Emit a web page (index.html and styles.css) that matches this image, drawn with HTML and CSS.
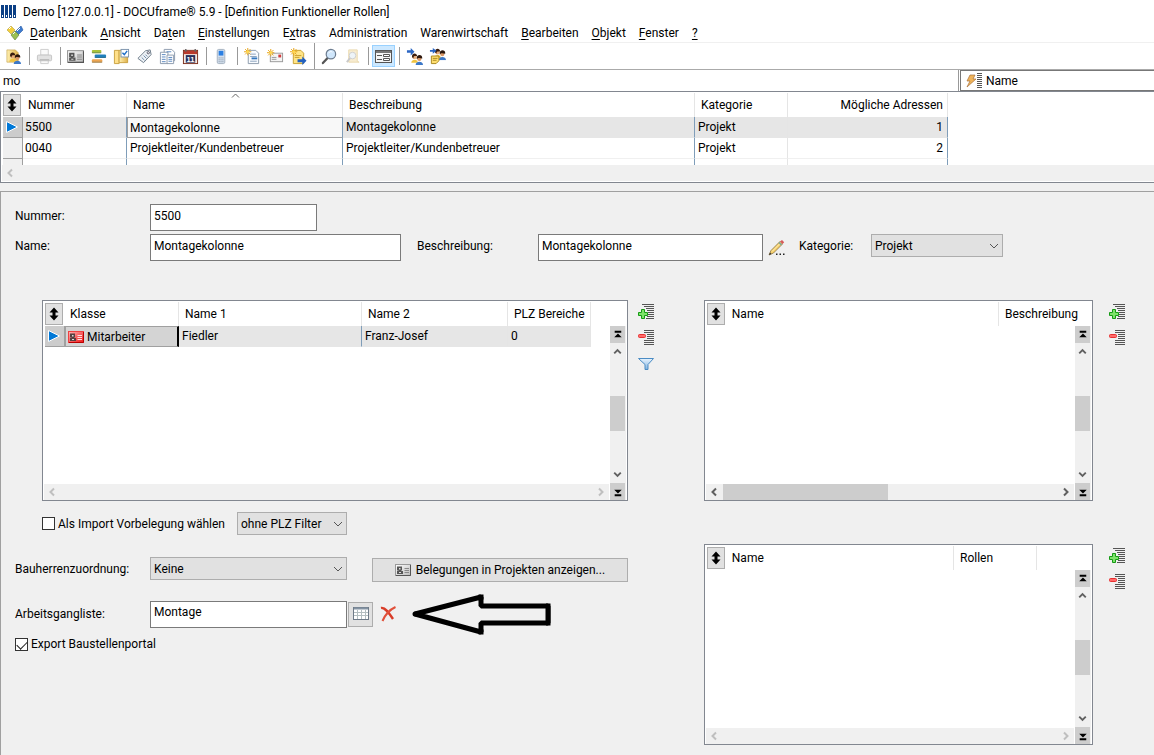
FILE: index.html
```html
<!DOCTYPE html>
<html lang="de">
<head>
<meta charset="utf-8">
<title>Demo [127.0.0.1] - DOCUframe® 5.9</title>
<link rel="stylesheet" href="styles.css">
</head>
<body>
<svg class="defs" aria-hidden="true">
  <defs>
    <linearGradient id="g-card" x1="0" y1="0" x2="1" y2="1"><stop offset="0" stop-color="#fff"/><stop offset="1" stop-color="#bbb"/></linearGradient>
    <linearGradient id="g-red" x1="0" y1="0" x2="1" y2="1"><stop offset="0" stop-color="#ffb4b4"/><stop offset="1" stop-color="#f01414"/></linearGradient>
    <linearGradient id="g-fold" x1="0" y1="0" x2="1" y2="0"><stop offset="0" stop-color="#fff0b0"/><stop offset="1" stop-color="#dfb04a"/></linearGradient>
    <linearGradient id="g-blue" x1="0" y1="0" x2="0" y2="1"><stop offset="0" stop-color="#e8f4ff"/><stop offset="1" stop-color="#7fb2e0"/></linearGradient>
    <symbol id="i-updown" viewBox="0 0 16 16"><path d="M8 1.500l4.500 5H9.500v3h3L8 14.500l-4.500-5h3v-3h-3z" fill="#000"/></symbol>
    <symbol id="i-play" viewBox="0 0 16 16"><path d="M2.500 2.500v11l11-5.500z" fill="#0078d7" stroke="#fff" stroke-width="1"/></symbol>
    <symbol id="i-left" viewBox="0 0 16 16"><path d="M10 4.500L6.500 8l3.500 3.500" fill="none" stroke="currentColor" stroke-width="2"/></symbol>
    <symbol id="i-right" viewBox="0 0 16 16"><path d="M6 4.500L9.500 8 6 11.500" fill="none" stroke="currentColor" stroke-width="2"/></symbol>
    <symbol id="i-up" viewBox="0 0 16 16"><path d="M4.500 10L8 6.500l3.500 3.500" fill="none" stroke="currentColor" stroke-width="2"/></symbol>
    <symbol id="i-down" viewBox="0 0 16 16"><path d="M4.500 6L8 9.500 11.500 6" fill="none" stroke="currentColor" stroke-width="2"/></symbol>
    <symbol id="i-first" viewBox="0 0 16 16"><path d="M5 4h7v2H5zM8.500 7l4 4h-8z" fill="#000"/></symbol>
    <symbol id="i-last" viewBox="0 0 16 16"><path d="M5 11h7v2H5zM8.500 10l4-4h-8z" fill="#000"/></symbol>
    <symbol id="i-card" viewBox="0 0 16 16"><rect x=".5" y="2.500" width="15" height="11" fill="url(#g-card)" stroke="#999"/><path d="M15.500 3v10.500H1" fill="none" stroke="#555"/><path d="M2 4.500h5v4H6V9h2v3H2V9h1.500v-.5H2z" fill="#555"/><path d="M4 6h1.500v1.500H4zM4 10h2v1H4z" fill="#ddd"/><path d="M9.500 6.500H14M9.500 8.500H14M9.500 10.500H14" stroke="#888"/></symbol>
    <symbol id="i-cardred" viewBox="0 0 16 16"><rect x=".5" y="2.500" width="15" height="11" fill="url(#g-red)" stroke="#f04040"/><path d="M15.500 3v10.500H1" fill="none" stroke="#b80000"/><path d="M2 4.500h5v4H6V9h2v3H2V9h1.500v-.5H2z" fill="#554040"/><path d="M4 6h1.500v1.500H4zM4 10h2v1H4z" fill="#ddd"/><path d="M9.500 6.500H14M9.500 8.500H14M9.500 10.500H14" stroke="#ffdede"/></symbol>
    <symbol id="i-add" viewBox="0 0 18 16"><path d="M5 .5h12M7 2.500h10M9 4.500h8M10 6.500h7M11 8.500h6M11 10.500h6M10 12.500h7M9 14.500h8" stroke="#555"/><path d="M4.500 5.500h3v3h3v3h-3v3h-3v-3h-3v-3h3z" fill="#7ee36a" stroke="#159a15"/></symbol>
    <symbol id="i-remove" viewBox="0 0 18 16"><path d="M7 .5h10M7 2.500h10M10 4.500h7M10 6.500h7M10 8.500h7M7 10.500h10M7 12.500h10M7 14.500h10" stroke="#555"/><rect x="1.500" y="4.500" width="7" height="3" rx="1" fill="#ff6a6a" stroke="#e83030"/></symbol>
    <symbol id="i-filter" viewBox="0 0 18 16"><path d="M1.500 2.500h15L11 8.500v5H8v-5z" fill="url(#g-blue)" stroke="#4b8cc4"/></symbol>
    <symbol id="i-people" viewBox="0 0 18 18"><path d="M2 15c0-5 9-6 9 0z" fill="#f0c33e"/><circle cx="6.500" cy="7" r="3" fill="#e8ae7c"/><path d="M3 7c-.5-6 7-6 7-1-3 0-5-1-5 3z" fill="#3a1e10"/><path d="M8 18c0-6 10-6 10 0z" fill="#3c78c8"/><circle cx="13" cy="9.500" r="3" fill="#d99868"/><path d="M9.500 9c-.5-6 8-6 7.500 0-3 0-5-2-7.500 1z" fill="#2b160c"/></symbol>
    <symbol id="i-star" viewBox="0 0 10 10"><path d="M5 0v10M0 5h10M1.500 1.500l7 7M8.500 1.500l-7 7" stroke="#e8a51c" stroke-width="1.300"/><circle cx="5" cy="5" r="2" fill="#ffd850"/></symbol>
    <symbol id="i-page" viewBox="0 0 18 18"><path d="M3.500 2.500h8l3 3v11h-11z" fill="#f8fbff" stroke="#8a99aa"/><path d="M5.500 6.500h6M5.500 9h7M5.500 14h7" stroke="#8aa0bb"/><path d="M7 11h6" stroke="#3478c0" stroke-width="2"/></symbol>
  </defs>
</svg>

<div class="app">
  <header class="titlebar">
    <svg class="logo" viewBox="0 0 16 16"><path d="M0 1h3v13H0zM4 1h3v13H4zM8 1h3v13H8zM12 1h3v13h-3z" fill="#0b3f85"/><path d="M1 11h1v2H1zM5 11h1v2H5zM9 11h1v2H9zM13 11h1v2h-1z" fill="#fff"/></svg>
    <span>Demo [127.0.0.1] - DOCUframe® 5.9 - [Definition Funktioneller Rollen]</span>
  </header>

  <nav class="menubar">
    <svg class="menulogo" viewBox="0 0 18 18"><path d="M1 6l4-4 4 4-4 4z" fill="#f3cf3c" stroke="#b4a040" stroke-width=".6"/><path d="M8 9l7-7 2 4-6 6z" fill="#3e7cd0" stroke="#2355a0" stroke-width=".6"/><path d="M5 11l4-4 4 4-4 5z" fill="#9bc052" stroke="#5c7d38" stroke-width=".6"/><path d="M3 5l2-2M11 7l3-3M7 10l2-2" stroke="#fff"/></svg>
    <button><u>D</u>atenbank</button>
    <button><u>A</u>nsicht</button>
    <button>Da<u>t</u>en</button>
    <button><u>E</u>instellungen</button>
    <button>E<u>x</u>tras</button>
    <button>Administration</button>
    <button>Warenwirtschaft</button>
    <button><u>B</u>earbeiten</button>
    <button><u>O</u>bjekt</button>
    <button><u>F</u>enster</button>
    <button><u>?</u></button>
  </nav>

  <div class="toolbar" role="toolbar" aria-label="Werkzeuge">
    <button aria-label="Adressen"><svg viewBox="0 0 18 18"><path d="M2 2h9l3 3v10H2z" fill="url(#g-fold)" stroke="#c09a40" stroke-width=".6"/><use href="#i-people" x="3" y="3" width="14" height="14"/></svg></button>
    <span class="sep"></span>
    <button aria-label="Drucken"><svg viewBox="0 0 18 18"><path d="M5 1.500h8v6H5zM5 12h8v4.500H5z" fill="#fafafa" stroke="#ccc"/><rect x="1.500" y="7.500" width="15" height="6" rx="1" fill="#e2e2e2" stroke="#c4c4c4"/><path d="M4 12.500h10" stroke="#aaa"/></svg></button>
    <span class="sep"></span>
    <button aria-label="Karte"><svg viewBox="0 0 16 16"><use href="#i-card"/></svg></button>
    <button aria-label="Projekte"><svg viewBox="0 0 18 18"><rect x="2" y="2" width="10" height="3.500" rx="1" fill="#a9c33a"/><rect x="5" y="7" width="12" height="3.500" rx="1" fill="#1f7fbd"/><rect x="2" y="12" width="11" height="3.500" rx="1" fill="#eda550"/><path d="M2 5h10M5 10h12M2 15h11" stroke="#466" stroke-opacity=".5"/></svg></button>
    <button aria-label="Ordner"><svg viewBox="0 0 18 18"><path d="M1.500 2.500h5v14h-5z" fill="#ffe08a" stroke="#c9a040"/><path d="M6.500 2.500h9v13h-9z" fill="url(#g-fold)" stroke="#c9a040"/><rect x="8.500" y="1.500" width="8" height="8" fill="#fff" stroke="#7b93ad"/><path d="M10 5l2 2 3-4" stroke="#2070c8" stroke-width="1.500" fill="none"/></svg></button>
    <button aria-label="Etikett"><svg viewBox="0 0 18 18"><path d="M2 11L10 3l5-1 1 5-8 8.500z" fill="#eef2f6" stroke="#6b7a88"/><circle cx="13" cy="5" r="1.200" fill="#fff" stroke="#556"/><path d="M6 10l3 3M8 8l3 3M10 7l2 2" stroke="#6b88a8"/></svg></button>
    <button aria-label="Dokumente"><svg viewBox="0 0 18 18"><path d="M5.500 1.500h8l3 3v9h-11z" fill="#fff" stroke="#8c9bad"/><path d="M1.500 4.500h8v12h-8z" fill="#fff" stroke="#8c9bad"/><path d="M8.500 7.500h7v9h-7z" fill="#fff" stroke="#8c9bad"/><path d="M3 7h4M3 9.500h4M3 12h4M3 14.500h4M10 10h4M10 12h4M10 14h4M8 4h5" stroke="#5584bd"/></svg></button>
    <button aria-label="Kalender"><svg viewBox="0 0 18 18"><rect x="1.500" y="2.500" width="15" height="14" fill="#f4ece4" stroke="#7b2d1c"/><path d="M2 3h14v3.500H2z" fill="#b93a2c"/><path d="M4 1v3M14 1v3" stroke="#666" stroke-width="1.500"/><rect x="4" y="7.500" width="10" height="8" fill="#28305c"/><text x="9" y="14.500" class="day">11</text></svg></button>
    <span class="sep"></span>
    <button aria-label="Telefon"><svg viewBox="0 0 18 18"><rect x="4.500" y="1.500" width="8" height="15" rx="1.500" fill="#d4e0ee" stroke="#a4b0bf"/><rect x="6" y="3" width="5" height="5" fill="#2b7fe2"/><path d="M6 10.500h5M6 12.500h5M6 14.500h5" stroke="#7d8b9b" stroke-dasharray="1 1"/></svg></button>
    <span class="sep"></span>
    <button aria-label="Neues Dokument"><svg viewBox="0 0 18 18"><use href="#i-page" x="1" width="18" height="18"/><use href="#i-star" width="8" height="8"/></svg></button>
    <button aria-label="Neue Nachricht"><svg viewBox="0 0 18 18"><rect x="3.500" y="5.500" width="13" height="9" fill="#f4f4f4" stroke="#999"/><path d="M12 7h3v3h-3z" fill="#d23c3c"/><path d="M5 10h5M5 12h5" stroke="#999"/><use href="#i-star" y="1" width="8" height="8"/></svg></button>
    <button aria-label="Neue Aufgabe"><svg viewBox="0 0 18 18"><path d="M3.500 2.500h8l3 3v11h-11z" fill="#ffe486" stroke="#c9a030"/><path d="M5 8h7M5 10h5" stroke="#c9a030"/><path d="M8 12h5V9l4.500 4.500L13 18v-3H8z" fill="#2260c0"/><use href="#i-star" width="8" height="8"/></svg></button>
    <span class="sep sep-full"></span>
    <button aria-label="Suchen"><svg viewBox="0 0 18 18"><path d="M7 10.500L2 16" stroke="#555" stroke-width="2.400" stroke-linecap="round"/><circle cx="10.500" cy="6.500" r="5" fill="#cfe6fb" stroke="#6d7d90" stroke-width="1.300"/><path d="M8 5.500c1-2 3-2 4-1" stroke="#fff" fill="none"/></svg></button>
    <button aria-label="Ordnersuche"><svg viewBox="0 0 18 18"><path d="M5 2h9v12l2 1H5z" fill="#f8ecd0" stroke="#ead9ae"/><path d="M7 10l-4 5" stroke="#c9c9c9" stroke-width="2"/><circle cx="9" cy="8" r="3.500" fill="#eef4f8" stroke="#cfcfcf"/></svg></button>
    <span class="sep"></span>
    <button class="active" aria-label="Formularansicht"><svg viewBox="0 0 17 17"><rect x=".5" y="2.500" width="16" height="12" fill="#f5f5f5" stroke="#555"/><path d="M1 4h15" stroke="#777" stroke-width="2"/><path d="M2 7.500h5M2 11.500h5" stroke="#555"/><path d="M8.500 6.500h6v2h-6zM8.500 10.500h6v2h-6z" fill="#fff" stroke="#555"/></svg></button>
    <span class="sep"></span>
    <button aria-label="Zuordnen"><svg viewBox="0 0 18 18"><use href="#i-people" x="4" y="4" width="14" height="14"/><path d="M1 2.500h4V0l4 4-4 4V5H1z" fill="#2a66c4"/></svg></button>
    <button aria-label="Rollen"><svg viewBox="0 0 18 18"><use href="#i-people" x="4" y="-1" width="14" height="14"/><path d="M1 2h3V0l4 3-4 3V4H1z" fill="#2a66c4"/><path d="M2.500 8.500h8v5l-3 3h-5z" fill="#ffdf70" stroke="#a8861c"/><path d="M4 11h5M4 13h4" stroke="#a8861c"/></svg></button>
  </div>

  <div class="search">
    <input class="search-text" type="text" value="mo" aria-label="Suche">
    <button class="search-field"><svg viewBox="0 0 18 16"><path d="M5 2h5L8 6h3l-9 8 3-6H2z" fill="#f0b45a" stroke="#a8703a" stroke-width=".7"/><path d="M12 .5h5M12 2.500h5M12 4.500h5M12 6.500h5M12 8.500h5M12 10.500h5M12 12.500h5M12 14.500h5" stroke="#555"/></svg><span>Name</span></button>
  </div>

  <section class="result">
    <div class="result-body">
      <table class="grid">
        <colgroup><col class="w20"><col class="w104"><col class="w216"><col class="w352"><col class="w93"><col class="w160"></colgroup>
        <thead><tr><th><button class="sorter" aria-label="Sortieren"><svg viewBox="0 0 16 16"><use href="#i-updown"/></svg></button></th><th>Nummer</th><th class="sorted">Name<svg class="caret" viewBox="0 0 9 5"><path d="M1 4.500L4.500 1 8 4.500" fill="none" stroke="#666"/></svg></th><th>Beschreibung</th><th>Kategorie</th><th class="num">Mögliche Adressen</th></tr></thead>
        <tbody>
          <tr class="sel"><td class="mark"><svg viewBox="0 0 16 16"><use href="#i-play"/></svg></td><td>5500</td><td class="focus">Montagekolonne</td><td>Montagekolonne</td><td>Projekt</td><td class="num">1</td></tr>
          <tr><td class="mark"></td><td>0040</td><td>Projektleiter/Kundenbetreuer</td><td>Projektleiter/Kundenbetreuer</td><td>Projekt</td><td class="num">2</td></tr>
          <tr><td class="mark"></td><td></td><td></td><td></td><td></td><td></td></tr>
        </tbody>
      </table>
    </div>
    <div class="hbar off"><svg viewBox="0 0 16 16"><use href="#i-left"/></svg></div>
  </section>

  <main class="form">
    <div class="row row-first">
      <label class="lab" for="nr">Nummer:</label><input class="field w167" id="nr" type="text" value="5500">
    </div>
    <div class="row">
      <label class="lab" for="nm">Name:</label><input class="field w251" id="nm" type="text" value="Montagekolonne">
      <label class="lab lab-desc" for="be">Beschreibung:</label><input class="field w225" id="be" type="text" value="Montagekolonne">
      <button class="icon pencil" aria-label="Bearbeiten"><svg viewBox="0 0 18 18"><path d="M1 16l2-4.500L12 2.500l2.500 2.500-9 9z" fill="#f6cf6a" stroke="#8c7440" stroke-width=".8"/><path d="M4 12.500L13 3.500" stroke="#fff0b8"/><path d="M12 2.500l2-1.500 2.200 2.200L14.500 5z" fill="#d85a5a"/><path d="M11 3.500l2.500 2.500" stroke="#77a89a" stroke-width="1.400"/><path d="M1 16l1-2.500 1.500 1.500z" fill="#333"/><path d="M8 14.500h1.500V16H8zM11.500 14.500H13V16h-1.500zM15 14.500h1.500V16H15z" fill="#222"/></svg></button>
      <label class="lab lab-cat" for="ka">Kategorie:</label><span class="pick w132"><select id="ka"><option>Projekt</option></select><svg viewBox="0 0 10 6"><path d="M1 1l4 4 4-4" fill="none" stroke="#555"/></svg></span>
    </div>

    <div class="panels">
      <div class="left">
        <div class="listrow">
          <div class="list">
            <table class="grid grid-left">
              <colgroup><col class="w20"><col class="w114"><col class="w183"><col class="w146"><col class="w83"></colgroup>
              <thead><tr><th><button class="sorter" aria-label="Sortieren"><svg viewBox="0 0 16 16"><use href="#i-updown"/></svg></button></th><th>Klasse</th><th>Name 1</th><th>Name 2</th><th>PLZ Bereiche</th></tr></thead>
              <tbody><tr class="sel"><td class="mark"><svg viewBox="0 0 16 16"><use href="#i-play"/></svg></td><td class="klass"><svg viewBox="0 0 16 16"><use href="#i-cardred"/></svg>Mitarbeiter</td><td>Fiedler</td><td>Franz-Josef</td><td>0</td></tr></tbody>
            </table>
            <div class="vbar"><svg class="end" viewBox="0 0 16 16"><use href="#i-first"/></svg><svg viewBox="0 0 16 16"><use href="#i-up"/></svg><div class="track"><span class="thumb"></span></div><svg viewBox="0 0 16 16"><use href="#i-down"/></svg><svg class="end" viewBox="0 0 16 16"><use href="#i-last"/></svg></div>
            <div class="hbar off"><svg viewBox="0 0 16 16"><use href="#i-left"/></svg><svg viewBox="0 0 16 16"><use href="#i-right"/></svg></div>
          </div>
        </div>

        <div class="line line-import">
          <label class="tick tick-import"><input type="checkbox"><span>Als Import Vorbelegung wählen</span></label>
          <span class="pick w110"><select aria-label="PLZ Filter"><option>ohne PLZ Filter</option></select><svg viewBox="0 0 10 6"><path d="M1 1l4 4 4-4" fill="none" stroke="#555"/></svg></span>
        </div>
        <div class="line line-bau">
          <label class="lab" for="bh">Bauherrenzuordnung:</label><span class="pick w197"><select id="bh"><option>Keine</option></select><svg viewBox="0 0 10 6"><path d="M1 1l4 4 4-4" fill="none" stroke="#555"/></svg></span>
          <button class="wide"><svg viewBox="0 0 16 16"><use href="#i-card"/></svg>Belegungen in Projekten anzeigen...</button>
        </div>
        <div class="line line-arb">
          <label class="lab" for="ag">Arbeitsgangliste:</label><input class="field w197" id="ag" type="text" value="Montage">
          <button class="browse" aria-label="Auswählen"><svg viewBox="0 0 18 16"><rect x="1.500" y="1.500" width="15" height="12" fill="#fff" stroke="#6f7b88"/><path d="M2 2.500h14" stroke="#8392a2" stroke-width="2"/><path d="M2 6.500h14M2 9.500h14M5.500 4v9M9.500 4v9M13.500 4v9" stroke="#b4bec0"/></svg></button>
          <button class="icon" aria-label="Entfernen"><svg viewBox="0 0 16 16"><path d="M1 2c4-1 8 5 12 11" fill="none" stroke="#d83c28" stroke-width="2.400"/><path d="M15.500 1C9 4 5 9 2.500 15" fill="none" stroke="#e0503a" stroke-width="2"/></svg></button>
          <svg class="arrow" viewBox="0 0 140 42"><path d="M3 21L69 4v9h67v17H69v9z" fill="none" stroke="#000" stroke-width="5" stroke-linejoin="bevel"/><path d="M134 10.500h4.500v22H134zM66.500 1.500h5v5h-5zM66.500 36.500h5v5h-5z"/><circle cx="3" cy="21" r="2.500"/></svg>
        </div>
        <label class="tick tick-export"><input type="checkbox" checked><span>Export Baustellenportal</span></label>
      </div>

      <div class="side">
        <button class="icon" aria-label="Hinzufügen"><svg viewBox="0 0 18 16"><use href="#i-add"/></svg></button>
        <button class="icon" aria-label="Entfernen"><svg viewBox="0 0 18 16"><use href="#i-remove"/></svg></button>
        <button class="icon" aria-label="Filter"><svg viewBox="0 0 18 16"><use href="#i-filter"/></svg></button>
      </div>

      <div class="right">
        <div class="listrow">
          <div class="list">
            <table class="grid grid-full">
              <colgroup><col class="w20"><col><col class="w92"></colgroup>
              <thead><tr><th><button class="sorter" aria-label="Sortieren"><svg viewBox="0 0 16 16"><use href="#i-updown"/></svg></button></th><th>Name</th><th class="last">Beschreibung</th></tr></thead>
            </table>
            <div class="vbar"><svg class="end" viewBox="0 0 16 16"><use href="#i-first"/></svg><svg viewBox="0 0 16 16"><use href="#i-up"/></svg><div class="track"><span class="thumb"></span></div><svg viewBox="0 0 16 16"><use href="#i-down"/></svg><svg class="end" viewBox="0 0 16 16"><use href="#i-last"/></svg></div>
            <div class="hbar"><svg viewBox="0 0 16 16"><use href="#i-left"/></svg><span class="hthumb"></span><svg viewBox="0 0 16 16"><use href="#i-right"/></svg></div>
          </div>
          <div class="side">
            <button class="icon" aria-label="Hinzufügen"><svg viewBox="0 0 18 16"><use href="#i-add"/></svg></button>
            <button class="icon" aria-label="Entfernen"><svg viewBox="0 0 18 16"><use href="#i-remove"/></svg></button>
          </div>
        </div>
        <div class="listrow">
          <div class="list">
            <table class="grid grid-full">
              <colgroup><col class="w20"><col><col class="w83"><col class="w54"></colgroup>
              <thead><tr><th><button class="sorter" aria-label="Sortieren"><svg viewBox="0 0 16 16"><use href="#i-updown"/></svg></button></th><th>Name</th><th>Rollen</th><th class="last"></th></tr></thead>
            </table>
            <div class="vbar"><svg class="end" viewBox="0 0 16 16"><use href="#i-first"/></svg><svg viewBox="0 0 16 16"><use href="#i-up"/></svg><div class="track"><span class="thumb"></span></div><svg viewBox="0 0 16 16"><use href="#i-down"/></svg><svg class="end" viewBox="0 0 16 16"><use href="#i-last"/></svg></div>
            <div class="hbar off"><svg viewBox="0 0 16 16"><use href="#i-left"/></svg><svg viewBox="0 0 16 16"><use href="#i-right"/></svg></div>
          </div>
          <div class="side">
            <button class="icon" aria-label="Hinzufügen"><svg viewBox="0 0 18 16"><use href="#i-add"/></svg></button>
            <button class="icon" aria-label="Entfernen"><svg viewBox="0 0 18 16"><use href="#i-remove"/></svg></button>
          </div>
        </div>
      </div>
    </div>
  </main>
</div>
</body>
</html>
```
FILE: styles.css
```css
* { box-sizing: border-box; }
body { margin: 0; background: #f0f0f0; color: #000; font: 12px/16px Roboto, "Noto Sans", sans-serif; }
button, input, select { font: inherit; color: inherit; margin: 0; border-radius: 0; }
button { padding: 0; border: 0; background: none; }
svg { display: block; flex: none; }
.defs { position: absolute; width: 0; height: 0; }
.app { display: flex; flex-direction: column; min-height: 100vh; }

.titlebar { display: flex; align-items: center; gap: 6px; height: 24px; padding-left: 1px; background: #fff; white-space: nowrap; }
.logo { width: 16px; height: 16px; }
.menubar { display: flex; align-items: center; height: 18px; padding-left: 6px; background: #fff; }
.menulogo { width: 18px; height: 18px; }
.menubar button { padding: 0 7px 0 6px; white-space: nowrap; }
.menubar u { text-underline-offset: 2px; }

.toolbar { display: flex; align-items: center; height: 28px; padding-left: 2px; background: #fff; border-top: 1px solid #f0f0f0; border-bottom: 1px solid #aaa; }
.toolbar button { display: flex; align-items: center; justify-content: center; width: 23px; height: 22px; }
.toolbar svg { width: 17px; height: 17px; }
.toolbar .active { background: #cce8ff; border: 1px solid #99d1ff; }
.sep { width: 8px; height: 18px; border-left: 4px solid #fff; background: linear-gradient(90deg, #999 1px, transparent 1px); }
.sep-full { height: 26px; }
.day { font: bold 8px "Liberation Sans", sans-serif; fill: #fff; text-anchor: middle; }

.search { display: flex; gap: 1px; height: 21px; background: #fff; }
.search-text { flex: 1; min-width: 0; padding: 0 3px; border: 0; border-right: 1px solid #999; background: #fff; }
.search-field { display: flex; align-items: center; gap: 3px; width: 194px; padding-left: 4px; border: 1px solid #777; border-right: 0; }
.search-field svg { width: 18px; height: 16px; }

.result { border: 1px solid #828790; border-right: 0; background: #fff; padding: 1px 0 1px 1px; }
.result-body { height: 72px; overflow: hidden; padding-left: 1px; }
.grid { border-collapse: separate; border-spacing: 0; table-layout: fixed; width: 0; }
.grid th { height: 24px; padding: 0 6px; font-weight: normal; text-align: left; white-space: nowrap; border-right: 1px solid #e5e5e5; }
.grid th:first-child { padding: 0; border-right: 0; }
.grid th:nth-child(2) { padding-left: 5px; }
.grid .last { border-right: 0; }
.grid td { height: 21px; padding: 0 3px; white-space: nowrap; border-right: 1px solid #7f9db9; border-bottom: 1px solid #f0f0f0; }
.grid td:nth-child(2) { padding-left: 2px; }
.grid td:nth-child(5) { border-right-color: #e5e5e5; }
.grid .num { text-align: right; padding-right: 4px; }
.grid .sel td { background: #e6e6e6; border-bottom-color: #e6e6e6; }
.grid .mark, .grid .sel .mark { padding: 0 0 0 1px; background: #f0f0f0; border-right: 1px solid #a0a0a0; border-bottom: 1px solid #a0a0a0; }
.grid .sel .mark { background: #ccc; }
.mark svg { width: 16px; height: 16px; }
.grid .sel .focus { background: #f8f8f8; padding-left: 2px; border: 1px solid #a0a0a0; border-right-color: #7f9db9; }
.sorter { display: flex; align-items: center; justify-content: center; width: 18px; height: 22px; background: #e1e1e1; border: 1px solid #adadad; }
.sorter svg { width: 16px; height: 16px; }
.sorted { position: relative; }
.caret { position: absolute; top: 0; left: 50%; width: 9px; height: 5px; margin-left: -4px; }

.hbar { display: flex; align-items: center; justify-content: space-between; height: 16px; background: #f0f0f0; color: #606060; }
.hbar svg { width: 16px; height: 16px; }
.off, .list .off { color: #bfbfbf; }
.hthumb { align-self: stretch; width: 45%; margin: 0 auto 0 1px; background: #cdcdcd; }

.form { flex: 1; margin-top: 8px; padding: 12px 0 9px 14px; border-top: 1px solid #a0a0a0; border-left: 1px solid #a0a0a0; }
.row { display: flex; align-items: flex-start; }
.row-first { margin-bottom: 3px; }
.lab { width: 135px; padding-top: 4px; white-space: nowrap; }
.field { height: 27px; padding: 0 3px 4px; border: 1px solid #7a7a7a; background: #fff; }
.lab-desc { width: 121px; margin-left: 16px; }
.lab-cat { width: 72px; }
.icon { display: flex; }
.icon svg { width: 18px; height: 16px; }
.pencil { width: 36px; padding: 5px 0 0 5px; }
.pencil svg { height: 18px; }
.pick { display: flex; position: relative; }
.pick select { appearance: none; width: 100%; height: 23px; padding: 0 18px 0 3px; border: 1px solid #adadad; background: #e1e1e1; }
.pick svg { position: absolute; right: 4px; top: 9px; width: 10px; height: 6px; pointer-events: none; }

.panels { display: flex; align-items: flex-start; margin-top: 39px; }
.left { flex: 3 1 29px; min-width: 0; }
.left .listrow { padding-left: 27px; }
.side { display: flex; flex-direction: column; gap: 10px; padding-top: 4px; }
.panels > .side { width: 76px; padding-left: 9px; }
.right { flex: 2 1 61px; display: flex; flex-direction: column; gap: 43px; min-width: 0; }
.listrow { display: flex; }
.right .side { width: 61px; padding-left: 15px; }
.list { flex: 1; min-width: 0; display: grid; grid-template-columns: minmax(0, 1fr) 16px; grid-template-rows: 24px 158px 16px; column-gap: 1px; height: 201px; padding: 1px; border: 1px solid #828790; background: #fff; overflow: hidden; }
.list .grid { grid-row: 1 / 3; grid-column: 1 / 3; align-self: start; margin-left: 1px; }
.list .grid-full { width: auto; justify-self: stretch; }
.vbar { grid-row: 2 / 4; grid-column: 2; display: flex; flex-direction: column; background: #f0f0f0; color: #606060; }
.vbar svg { width: 15px; height: 17px; }
.vbar .end { background: #cdcdcd; }
.track { flex: 1; display: flex; align-items: center; }
.thumb { width: 15px; height: 35px; background: #cdcdcd; }
.list .hbar { grid-row: 3; grid-column: 1; }
.grid .sel .klass { padding-left: 2px; background: #d4d4d4; border: 1px solid #a0a0a0; border-right: 2px solid #000; }
.klass svg { display: inline-block; width: 16px; height: 16px; margin-right: 3px; vertical-align: top; }
.grid-left td:nth-child(n+4) { border-right-color: #e5e5e5; }

.line { display: flex; align-items: flex-start; }
.line-import { align-items: center; margin-top: 11px; padding-left: 27px; }
.tick { display: flex; align-items: center; gap: 3px; white-space: nowrap; }
.tick-import { min-width: 195px; }
.tick input { appearance: none; width: 13px; height: 13px; border: 1px solid #333; background: #fff; }
.tick input:checked::before { content: ""; display: block; width: 9px; height: 5px; margin: 2px 1px; border-left: 1px solid #222; border-bottom: 1px solid #222; transform: rotate(-45deg); }
.line-bau { margin-top: 22px; }
.wide { display: flex; flex: 1; align-items: center; justify-content: center; gap: 5px; height: 24px; margin: 1px 0 0 25px; border: 1px solid #adadad; background: #e1e1e1; white-space: nowrap; }
.wide svg { width: 16px; height: 16px; }
.line-arb { align-items: center; margin-top: 11px; }
.line-arb .lab { padding: 0; }
.browse { display: flex; align-items: center; justify-content: center; width: 25px; height: 25px; margin: 0 7px 0 1px; border: 1px solid #adadad; background: #e1e1e1; }
.browse svg { width: 18px; height: 16px; }
.line-arb .icon svg { width: 16px; }
.arrow { width: 140px; height: 42px; margin-left: 16px; }
.tick-export { margin-top: 1px; }

.w20 { width: 20px; }
.w54 { width: 54px; }
.w83 { width: 83px; }
.w92 { width: 92px; }
.w93 { width: 93px; }
.w104 { width: 104px; }
.w110 { width: 110px; }
.w114 { width: 114px; }
.w132 { width: 132px; }
.w146 { width: 146px; }
.w160 { width: 160px; }
.w167 { width: 167px; }
.w183 { width: 183px; }
.w197 { width: 197px; }
.w216 { width: 216px; }
.w225 { width: 225px; }
.w251 { width: 251px; }
.w352 { width: 352px; }
```
